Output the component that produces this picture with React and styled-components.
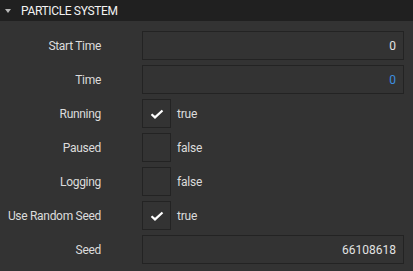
import styled, { createGlobalStyle } from "styled-components";

const GlobalStyle = createGlobalStyle`
  html, body {
    margin: 0;
    padding: 0;
    background: #333333;
  }
  body {
    font-family: Roboto, "Noto Sans", sans-serif;
  }
`;

const fields = [
  { label: "Start Time", type: "number", value: "0" },
  { label: "Time", type: "number", value: "0", accent: true },
  { label: "Running", type: "bool", value: true },
  { label: "Paused", type: "bool", value: false },
  { label: "Logging", type: "bool", value: false },
  { label: "Use Random Seed", type: "bool", value: true },
  { label: "Seed", type: "number", value: "66108618" },
];

export default function App() {
  return (
    <>
      <GlobalStyle />
      <Panel>
        <Header>
          <Arrow />
          <Title>PARTICLE SYSTEM</Title>
        </Header>
        <Body>
          {fields.map((f) => (
            <Row key={f.label}>
              <Label>{f.label}</Label>
              {f.type === "number" ? (
                <NumberInput $accent={f.accent}>{f.value}</NumberInput>
              ) : (
                <BoolField>
                  <Checkbox>
                    {f.value && (
                      <svg width="14" height="10" viewBox="0 0 14 10">
                        <path d="M1.5 5.2 L5 8.4 L12.5 1.5" fill="none" stroke="#ffffff" strokeWidth="2.2" />
                      </svg>
                    )}
                  </Checkbox>
                  <BoolText>{f.value ? "true" : "false"}</BoolText>
                </BoolField>
              )}
            </Row>
          ))}
        </Body>
      </Panel>
    </>
  );
}

const Panel = styled.div`
  width: 413px;
  height: 271px;
  background: #333333;
  overflow: hidden;
`;

const Header = styled.div`
  height: 21px;
  background: #202020;
  display: flex;
  align-items: center;
  padding-left: 5px;
`;

const Arrow = styled.span`
  width: 0;
  height: 0;
  border-left: 3.5px solid transparent;
  border-right: 3.5px solid transparent;
  border-top: 4px solid #b8b8b8;
  margin-right: 10px;
  margin-top: 1px;
`;

const Title = styled.span`
  color: #f2f2f2;
  font-size: 12px;
  letter-spacing: -0.35px;
  line-height: 1;
`;

const Body = styled.div`
  display: flex;
  flex-direction: column;
  gap: 5px;
  padding: 10px 9px 0 0;
`;

const Row = styled.div`
  display: flex;
  align-items: center;
  height: 29px;
`;

const Label = styled.div`
  width: 101px;
  margin-right: 41px;
  display: flex;
  justify-content: flex-end;
  color: #dcdcdc;
  font-size: 12px;
  letter-spacing: -0.3px;
  white-space: nowrap;
`;

const NumberInput = styled.div`
  flex: 1;
  height: 29px;
  box-sizing: border-box;
  border: 1px solid #232323;
  display: flex;
  align-items: center;
  justify-content: flex-end;
  padding-right: 7px;
  font-size: 12px;
  color: ${(p) => (p.$accent ? "#3d8fe0" : "#e2e2e2")};
`;

const BoolField = styled.div`
  display: flex;
  align-items: center;
  gap: 6px;
`;

const Checkbox = styled.div`
  width: 29px;
  height: 29px;
  box-sizing: border-box;
  border: 1px solid #232323;
  display: flex;
  align-items: center;
  justify-content: center;
`;

const BoolText = styled.span`
  color: #dcdcdc;
  font-size: 12px;
  letter-spacing: -0.2px;
`;
